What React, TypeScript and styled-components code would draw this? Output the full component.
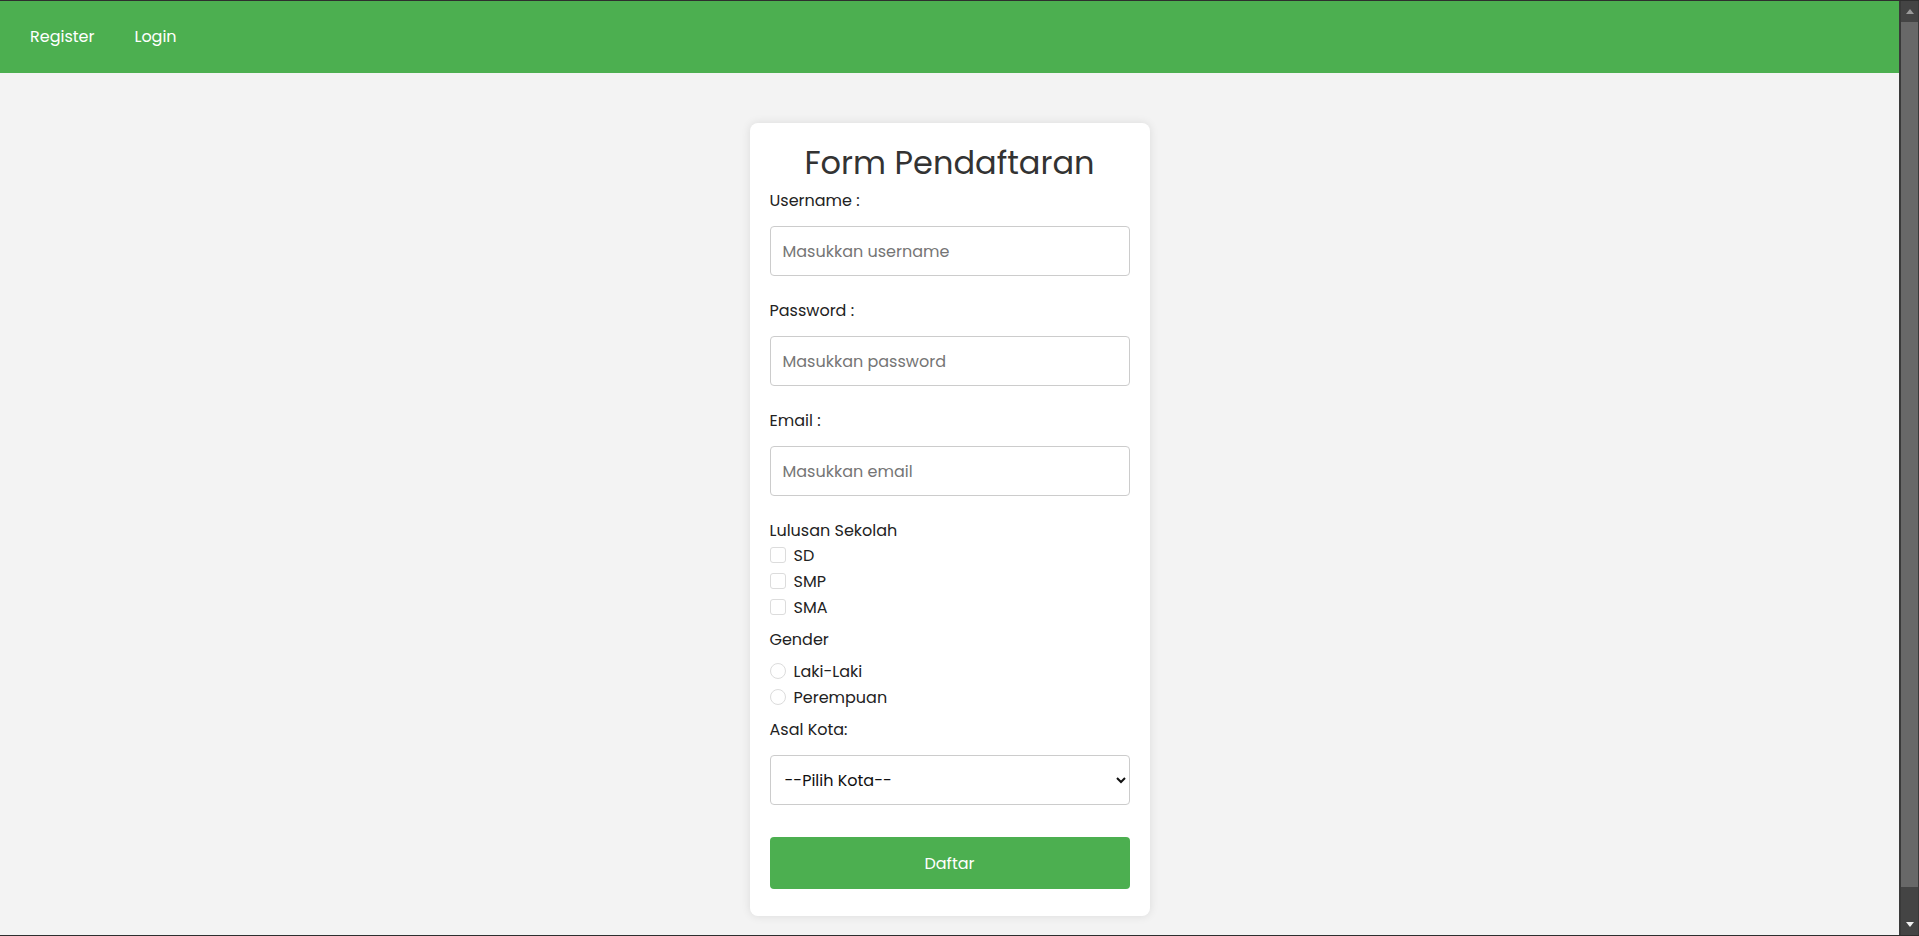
import React from "react";
import styled, { createGlobalStyle } from "styled-components";

const FONT = `Poppins, "Open Sans", "DejaVu Sans", sans-serif`;

const GlobalStyle = createGlobalStyle`
  html, body {
    margin: 0;
    padding: 0;
    background: #2b2b2b;
  }
  * {
    box-sizing: border-box;
  }
  body {
    font-family: ${FONT};
  }
`;

const Frame = styled.div`
  height: 936px;
  display: flex;
  flex-direction: column;
  border-top: 1px solid #2e2e2e;
  border-bottom: 1px solid #2e2e2e;
`;

const Viewport = styled.div`
  flex: 1;
  display: flex;
  min-height: 0;
`;

const Page = styled.div`
  flex: 1;
  display: flex;
  flex-direction: column;
  background: #f3f3f3;
  overflow: hidden;
`;

const Navbar = styled.nav`
  height: 72px;
  flex: none;
  background: #4caf50;
  display: flex;
  align-items: center;
  padding: 0 10px;
`;

const NavLink = styled.a`
  padding: 0 20px;
  color: #ffffff;
  font-size: 16px;
  line-height: 24px;
  text-decoration: none;
  font-family: ${FONT};
`;

const Main = styled.main`
  flex: 1;
  display: flex;
  justify-content: center;
  align-items: flex-start;
  padding-top: 50px;
`;

const Card = styled.form`
  width: 400px;
  background: #ffffff;
  border-radius: 8px;
  box-shadow: 0 0 10px rgba(0, 0, 0, 0.1);
  padding: 21px 20px 27px;
  display: flex;
  flex-direction: column;
`;

const Title = styled.h2`
  margin: 0 0 7px;
  font-family: ${FONT};
  font-size: 32px;
  line-height: 38px;
  font-weight: 400;
  color: #333333;
  text-align: center;
`;

const Label = styled.label<{ $mt?: number; $mb?: number }>`
  display: block;
  font-family: ${FONT};
  font-size: 16px;
  line-height: 24px;
  color: #222222;
  margin-top: ${(p) => p.$mt ?? 0}px;
  margin-bottom: ${(p) => p.$mb ?? 0}px;
`;

const TextInput = styled.input`
  display: block;
  width: 100%;
  height: 50px;
  margin: 0 0 23px;
  padding: 0 12px;
  border: 1px solid #cccccc;
  border-radius: 4px;
  background: #ffffff;
  font-family: ${FONT};
  font-size: 16px;
  color: #222222;
  outline: none;
  &::placeholder {
    color: #757575;
  }
`;

const OptionRow = styled.label`
  display: flex;
  align-items: center;
  gap: 8px;
  height: 26px;
  font-family: ${FONT};
  font-size: 16px;
  color: #222222;
`;

const CheckBox = styled.input`
  appearance: none;
  margin: 0;
  width: 16px;
  height: 16px;
  border: 1px solid #dcdcdc;
  border-radius: 3px;
  background: #ffffff;
  flex: none;
`;

const Radio = styled.input`
  appearance: none;
  margin: 0;
  width: 16px;
  height: 16px;
  border: 1px solid #dcdcdc;
  border-radius: 50%;
  background: #ffffff;
  flex: none;
`;

const Select = styled.select`
  display: block;
  width: 100%;
  height: 50px;
  padding: 0 10px;
  border: 1px solid #cccccc;
  border-radius: 4px;
  background: #ffffff;
  font-family: ${FONT};
  font-size: 16px;
  color: #111111;
  outline: none;
`;

const SubmitButton = styled.button`
  margin-top: 32px;
  width: 100%;
  height: 52px;
  border: none;
  border-radius: 4px;
  background: #4caf50;
  color: #ffffff;
  font-family: ${FONT};
  font-size: 16px;
  cursor: pointer;
`;

const ScrollTrack = styled.div`
  width: 20px;
  flex: none;
  background: #444444;
  border-left: 2px solid #393939;
  border-right: 1px solid #393939;
  display: flex;
  flex-direction: column;
  align-items: stretch;
`;

const ScrollArrow = styled.div<{ $down?: boolean }>`
  height: 21px;
  flex: none;
  display: flex;
  align-items: center;
  justify-content: center;
  &::after {
    content: "";
    width: 0;
    height: 0;
    border-left: 4px solid transparent;
    border-right: 4px solid transparent;
    ${(p) =>
      p.$down
        ? "border-top: 5px solid #f0f0f0;"
        : "border-bottom: 5px solid #9a9a9a;"}
  }
`;

const ScrollThumb = styled.div`
  height: 865px;
  flex: none;
  background: #686868;
`;

const ScrollRest = styled.div`
  flex: 1;
`;

export default function App() {
  return (
    <>
      <GlobalStyle />
      <Frame>
        <Viewport>
          <Page>
            <Navbar>
              <NavLink href="#">Register</NavLink>
              <NavLink href="#">Login</NavLink>
            </Navbar>
            <Main>
              <Card onSubmit={(e) => e.preventDefault()}>
                <Title>Form Pendaftaran</Title>
                <Label $mb={13} htmlFor="username">Username :</Label>
                <TextInput id="username" type="text" placeholder="Masukkan username" />
                <Label $mb={13} htmlFor="password">Password :</Label>
                <TextInput id="password" type="password" placeholder="Masukkan password" />
                <Label $mb={13} htmlFor="email">Email :</Label>
                <TextInput id="email" type="email" placeholder="Masukkan email" />
                <Label $mb={-1}>Lulusan Sekolah</Label>
                <OptionRow><CheckBox type="checkbox" />SD</OptionRow>
                <OptionRow><CheckBox type="checkbox" />SMP</OptionRow>
                <OptionRow><CheckBox type="checkbox" />SMA</OptionRow>
                <Label $mt={8} $mb={6}>Gender</Label>
                <OptionRow><Radio type="radio" name="gender" />Laki-Laki</OptionRow>
                <OptionRow><Radio type="radio" name="gender" />Perempuan</OptionRow>
                <Label $mt={8} $mb={13} htmlFor="kota">Asal Kota:</Label>
                <Select id="kota" defaultValue="">
                  <option value="">--Pilih Kota--</option>
                  <option value="jakarta">Jakarta</option>
                  <option value="bandung">Bandung</option>
                  <option value="surabaya">Surabaya</option>
                </Select>
                <SubmitButton type="submit">Daftar</SubmitButton>
              </Card>
            </Main>
          </Page>
          <ScrollTrack>
            <ScrollArrow />
            <ScrollThumb />
            <ScrollRest />
            <ScrollArrow $down />
          </ScrollTrack>
        </Viewport>
      </Frame>
    </>
  );
}
